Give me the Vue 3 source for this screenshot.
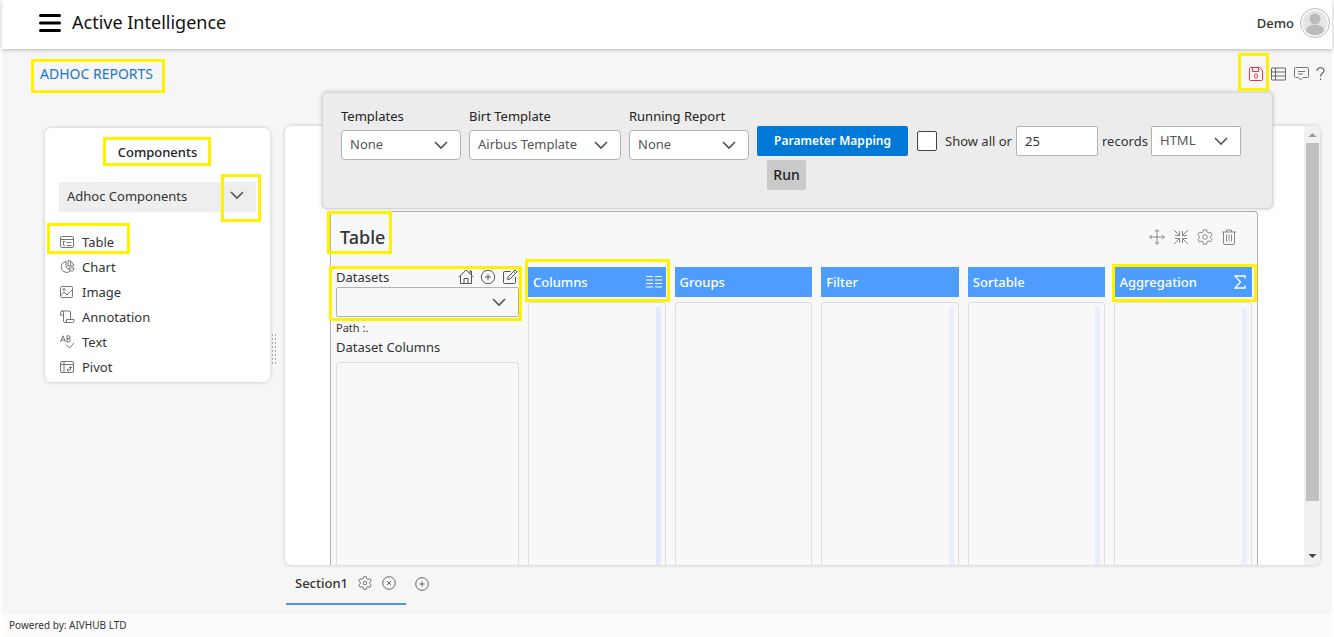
<script setup>
import { ref } from 'vue'

const components = [
  { name: 'Table', icon: 'table' },
  { name: 'Chart', icon: 'chart' },
  { name: 'Image', icon: 'image' },
  { name: 'Annotation', icon: 'annotation' },
  { name: 'Text', icon: 'text' },
  { name: 'Pivot', icon: 'pivot' },
]

const pickers = [
  { id: 'templates', label: 'Templates', value: 'None' },
  { id: 'birt', label: 'Birt Template', value: 'Airbus Template', wide: true },
  { id: 'running', label: 'Running Report', value: 'None' },
]

const columns = [
  { name: 'Columns', icon: 'list', mark: true, track: 'strong' },
  { name: 'Groups' },
  { name: 'Filter', track: 'soft' },
  { name: 'Sortable', track: 'soft' },
  { name: 'Aggregation', icon: 'sigma', mark: true, track: 'soft' },
]

const records = ref('25')
const showAll = ref(false)
</script>

<template>
  <div class="app">
    <header class="topbar">
      <button class="icon-btn menu" aria-label="Menu">
        <svg width="22" height="20" viewBox="0 0 22 20"><path d="M1.5 2.5h19M1.5 10h19M1.5 17.5h19" stroke="#000" stroke-width="3" stroke-linecap="round" /></svg>
      </button>
      <h1>Active Intelligence</h1>
      <span class="user">Demo</span>
      <svg class="avatar" width="30" height="30" viewBox="0 0 30 30">
        <circle cx="15" cy="15" r="14.5" fill="#fff" stroke="#b9b9b9" />
        <circle cx="15" cy="15" r="12.5" fill="#e4e5e6" />
        <circle cx="15" cy="11" r="5.5" fill="#babbbd" />
        <path d="M6 23.500c0-5 3.500-6.500 9-6.500s9 1.500 9 6.500a12.500 12.500 0 0 1-18 0z" fill="#babbbd" />
      </svg>
    </header>

    <main class="body">
      <div class="subbar">
        <a class="crumb host" href="#">ADHOC REPORTS<span class="mark mark-crumb"></span></a>
        <div class="tools">
          <button class="icon-btn host" aria-label="Save">
            <svg width="14" height="14" viewBox="0 0 14 14" fill="none" stroke="#e8343f"><path d="M1.500.5H10.500L13.500 3.500v9a1 1 0 0 1-1 1h-11a1 1 0 0 1-1-1v-11a1 1 0 0 1 1-1zM3.500.5v4h6v-4" /><rect x="5.500" y="7" width="3" height="4" rx="1.300" /></svg>
            <span class="mark mark-save"></span>
          </button>
          <button class="icon-btn" aria-label="Grid">
            <svg width="15" height="14" viewBox="0 0 15 14" fill="none" stroke="#666"><rect x=".5" y="1" width="14" height="12" rx="1" /><path d="M.5 5h14M.5 9h14M4.500 1v12" /></svg>
          </button>
          <button class="icon-btn" aria-label="Comments">
            <svg width="15" height="14" viewBox="0 0 15 14" fill="none" stroke="#777"><path d="M1.500.5h12a1 1 0 0 1 1 1v8a1 1 0 0 1-1 1H9L6.500 13 4.500 10.500h-3a1 1 0 0 1-1-1v-8a1 1 0 0 1 1-1zM4 4.500h7M4 7h5" /></svg>
          </button>
          <button class="icon-btn" aria-label="Help">
            <svg class="help" width="7" height="14" viewBox="1 0 7 14" fill="none" stroke="#555"><path d="M1 4C1 1.700 2.500.7 4.500.7S8 1.900 8 3.700C8 6.200 4.500 6.300 4.500 9.500M4.500 11.500v1.500" stroke-width="1.100" /></svg>
          </button>
        </div>
      </div>

      <div class="workspace">
        <aside class="sidebar">
          <h2><span class="host">Components<span class="mark mark-comp"></span></span></h2>
          <button class="accordion">
            <span>Adhoc Components</span>
            <span class="host chev-slot">
              <svg class="chev" width="14" height="9" viewBox="0 0 14 9"><path d="M1 1l6 6 6-6" /></svg>
              <span class="mark mark-chev"></span>
            </span>
          </button>
          <ul>
            <li v-for="c in components" :key="c.name" class="host">
              <svg width="15" height="14" viewBox="0 0 15 14" fill="none" stroke="#666" stroke-width="0.900">
                <template v-if="c.icon === 'table'"><rect x=".5" y="1.500" width="13" height="11" rx="1.500" /><path d="M.5 4.500h13M2.500 6.500h2.500M3.500 6.500v4H5M6.500 7.500h5M6.500 10.500h5" /></template>
                <template v-else-if="c.icon === 'chart'"><path d="M6 1.500A5.500 5.500 0 1 0 10.500 11L6 7zM8 .5V6h5.500A5.500 5.500 0 0 0 8 .5zM8.500 8H14a5 5 0 0 1-2 3.500zM10.500 1.500V6" /></template>
                <template v-else-if="c.icon === 'image'"><rect x=".5" y="1.500" width="12" height="11" rx="1" /><path d="M.5 11l3.500-4 3 3 5.500-5.500" /><circle cx="4" cy="4.500" r="1" /></template>
                <template v-else-if="c.icon === 'annotation'"><path d="M.5 5V2.500a1.500 1.500 0 0 1 3 0V5h-3M2 1h7.500a1 1 0 0 1 1 1v7.500M3.500 5v6a1.500 1.500 0 0 0 1.500 1.500h7.500A1.500 1.500 0 0 0 14 11V9.500H6.500V11A1.500 1.500 0 0 1 5 12.500" /></template>
                <template v-else-if="c.icon === 'text'"><path d="M.5 7L3 .8 5.500 7M1.300 5h3.400M7 .8V7h2a1.700 1.700 0 0 0 0-3.300H7h1.800a1.400 1.400 0 0 0 0-2.900zM6 9.500l3.500 3.500L14 8" /></template>
                <template v-else><rect x=".5" y="1.500" width="13" height="11" rx="1.500" /><path d="M.5 4.500h13M4 1.500v11M7.500 10h3V7M9 8l1.500-1.500L12 8M8.500 8.500L7 10l1.500 1.500" /></template>
              </svg>
              <span>{{ c.name }}</span>
              <span v-if="c.icon === 'table'" class="mark mark-item"></span>
            </li>
          </ul>
        </aside>

        <div class="splitter"></div>

        <div class="stage">
          <section class="canvas">
            <div class="viewport">
              <article class="panel">
                <div class="panel-head">
                  <h2>Table</h2>
                  <span class="mark mark-title"></span>
                  <div class="panel-tools">
                    <button class="icon-btn" aria-label="Move"><svg width="16" height="16" viewBox="0 0 16 16"><path d="M8 .7v14.600M.7 8h14.600M5.800 2.800L8 .7l2.200 2.100M5.800 13.200L8 15.300l2.200-2.100M2.800 5.800L.7 8l2.100 2.200M13.200 5.800L15.300 8l-2.100 2.200" /></svg></button>
                    <button class="icon-btn" aria-label="Shrink"><svg width="16" height="16" viewBox="0 0 16 16"><path d="M1 1l5.500 5.500M2 6.500h4.500V2M15 1L9.500 6.500M14 6.500H9.500V2M1 15l5.500-5.500M2 9.500h4.500V14M15 15L9.500 9.500M14 9.500H9.500V14" /></svg></button>
                    <button class="icon-btn" aria-label="Settings"><svg width="16" height="16" viewBox="0 0 16 16"><path d="M6.500.8h3l.5 2.300 1.300.8 2.300-.8 1.500 2.600-1.700 1.600v1.400l1.700 1.600-1.500 2.600-2.300-.8-1.300.8-.5 2.300h-3L6 12.900l-1.300-.8-2.300.8-1.500-2.600 1.700-1.600V7.300L.9 5.700l1.500-2.600 2.300.8L6 3.100z" /><circle cx="8" cy="8" r="2.300" /></svg></button>
                    <button class="icon-btn" aria-label="Delete"><svg width="16" height="16" viewBox="0 0 16 16"><path d="M1 3h14M5.500 3V1h5v2M2.500 3v11a1.500 1.500 0 0 0 1.500 1.500h8a1.500 1.500 0 0 0 1.500-1.500V3M5.500 5.500v7M8 5.500v7M10.500 5.500v7" /></svg></button>
                  </div>
                </div>

                <div class="grid">
                  <div class="datasets host">
                    <div class="ds-label">
                      <label for="dataset">Datasets</label>
                      <button class="icon-btn" aria-label="Home"><svg width="16" height="16" viewBox="0 0 16 16"><path d="M.7 8L8 1l7.300 7M2.500 6.500v8h11v-8M6 14.500v-5h4v5M12 4.500V2h1.500v4" /></svg></button>
                      <button class="icon-btn" aria-label="Add dataset"><svg width="16" height="16" viewBox="0 0 16 16"><circle cx="8" cy="8" r="6.700" /><path d="M8 5v6M5 8h6" /></svg></button>
                      <button class="icon-btn" aria-label="Edit dataset"><svg width="16" height="16" viewBox="0 0 16 16"><path d="M8.500 2.500h-6a1 1 0 0 0-1 1v10a1 1 0 0 0 1 1h10a1 1 0 0 0 1-1V8M5.500 10.500l.6-2.600L13 1l2 2-6.900 6.900zM11.500 2.500l2 2" /></svg></button>
                    </div>
                    <div class="select ds-select">
                      <select id="dataset"><option></option></select>
                      <svg class="chev" width="14" height="9" viewBox="0 0 14 9"><path d="M1 1l6 6 6-6" /></svg>
                    </div>
                    <p class="path">Path :.</p>
                    <p class="ds-cols">Dataset Columns</p>
                    <div class="drop"></div>
                    <span class="mark mark-ds"></span>
                  </div>

                  <div v-for="c in columns" :key="c.name" class="column">
                    <div class="col-head host">
                      <span>{{ c.name }}</span>
                      <svg v-if="c.icon === 'list'" width="16" height="14" viewBox="0 0 16 14"><path d="M0 1.500h7M9 1.500h7M0 5h7M9 5h7M0 8.500h7M9 8.500h7M0 12h7M9 12h7" stroke="#fff" /></svg>
                      <svg v-if="c.icon === 'sigma'" width="14" height="14" viewBox="0 0 14 14" fill="none"><path d="M11 3.500V1H1l5.500 6L1 13h10v-2.500" stroke="#fff" stroke-width="1.300" /></svg>
                      <span v-if="c.mark" class="mark" :class="c.icon === 'list' ? 'mark-cols' : 'mark-agg'"></span>
                    </div>
                    <div class="drop"><i v-if="c.track" :class="c.track"></i></div>
                  </div>
                </div>
              </article>
              <div class="scrollbar">
                <svg width="15" height="17" viewBox="0 0 15 17"><path d="M3.500 11h8l-4-4z" fill="#9a9a9a" /></svg>
                <div class="thumb"></div>
                <div class="rest"></div>
                <svg width="15" height="17" viewBox="0 0 15 17"><path d="M3.500 6h8l-4 4z" fill="#444" /></svg>
              </div>
            </div>

            <form class="toolbar" @submit.prevent>
              <div v-for="p in pickers" :key="p.id" class="picker" :class="{ wide: p.wide }">
                <label :for="p.id">{{ p.label }}</label>
                <div class="select">
                  <select :id="p.id"><option>{{ p.value }}</option></select>
                  <svg class="chev" width="14" height="9" viewBox="0 0 14 9"><path d="M1 1l6 6 6-6" /></svg>
                </div>
              </div>
              <div class="actions">
                <div class="row">
                  <button class="primary">Parameter Mapping</button>
                  <input id="all" v-model="showAll" type="checkbox" />
                  <label for="all" class="all">Show all or</label>
                  <input id="records" v-model="records" type="text" />
                  <label for="records" class="rec">records</label>
                  <div class="select format">
                    <select aria-label="Format"><option>HTML</option></select>
                    <svg class="chev" width="14" height="9" viewBox="0 0 14 9"><path d="M1 1l6 6 6-6" /></svg>
                  </div>
                </div>
                <button class="run">Run</button>
              </div>
            </form>
          </section>

          <nav class="tabs">
            <div class="tab">
              <a href="#">Section1</a>
              <button class="icon-btn" aria-label="Section settings"><svg width="14" height="14" viewBox="0 0 16 16"><path d="M6.500.8h3l.5 2.300 1.300.8 2.300-.8 1.500 2.600-1.700 1.600v1.400l1.700 1.600-1.500 2.600-2.300-.8-1.300.8-.5 2.300h-3L6 12.900l-1.300-.8-2.300.8-1.500-2.600 1.700-1.600V7.300L.9 5.700l1.500-2.600 2.300.8L6 3.100z" /><circle cx="8" cy="8" r="2" /></svg></button>
              <button class="icon-btn" aria-label="Close section"><svg width="14" height="14" viewBox="0 0 14 14"><circle cx="7" cy="7" r="6.300" /><path d="M5 5l4 4M9 5l-4 4" /></svg></button>
            </div>
            <button class="icon-btn add" aria-label="Add section"><svg width="14" height="14" viewBox="0 0 14 14"><circle cx="7" cy="7" r="6.300" /><path d="M7 4.500v5M4.500 7h5" /></svg></button>
          </nav>
        </div>
      </div>
    </main>

    <footer>Powered by: AIVHUB LTD</footer>
  </div>
</template>

<style>
body { margin: 0; background: #fff; }
</style>

<style scoped>
* { box-sizing: border-box; }
.app {
  min-height: 100vh;
  display: flex;
  flex-direction: column;
  padding: 0 2px;
  font: 13px/20px "Noto Sans", sans-serif;
  color: #333;
}
h1, h2, p, ul { margin: 0; padding: 0; font-weight: 400; }
button, input, select { font: inherit; color: inherit; margin: 0; }
svg { display: block; flex: none; }
.icon-btn { display: block; padding: 0; border: 0; background: none; }
.host { position: relative; }
.mark { position: absolute; border: 3px solid #fff200; pointer-events: none; z-index: 5; }

.topbar {
  display: flex;
  align-items: center;
  height: 49px;
  padding: 0 2px 4px 37px;
  background: #fff;
  box-shadow: 0 1px 4px #0004;
  z-index: 1;
}
.topbar h1 { margin-left: 11px; padding-bottom: 2px; font: 18px/24px "Noto Sans", sans-serif; color: #111; }
.user { margin-left: auto; margin-right: 6px; font-weight: 500; }

.body { flex: 1; display: flex; flex-direction: column; background: #f6f6f6; }
.subbar { display: flex; justify-content: space-between; align-items: center; height: 50px; padding: 0 8px 0 38px; }
.crumb { color: #1c74cc; text-decoration: none; font-size: 14px; line-height: 22px; }
.tools { display: flex; gap: 8px; }
.help { overflow: visible; }
.mark-crumb { inset: -4px -12px -8px -9px; }
.mark-save { inset: -14px -6px -10px -11px; }

.workspace { flex: 1; display: flex; align-items: stretch; padding: 27px 12px 0 43px; }
.sidebar {
  align-self: flex-start;
  width: 225px;
  margin-top: 2px;
  padding: 14px 14px 2px;
  background: #fff;
  border-radius: 6px;
  box-shadow: 0 0 4px #0003;
}
.sidebar h2 { font: 500 13px/20px "Noto Sans", sans-serif; color: #222; text-align: center; }
.mark-comp { inset: -6px -14px -5px -15px; }
.accordion {
  display: flex;
  justify-content: space-between;
  align-items: center;
  width: 100%;
  height: 30px;
  margin-top: 20px;
  padding: 0 12px 3px 8px;
  border: 0;
  background: #eee;
}
.mark-chev { inset: -17px -17px -22px -9px; }
.chev { fill: none; stroke: #555; stroke-width: 1.6; }
.sidebar ul { list-style: none; margin-top: 18px; }
.sidebar li { display: flex; align-items: center; gap: 7px; height: 25px; padding: 0 0 2px 1px; }
.mark-item { inset: -7px 126px 1px -12px; }

.splitter {
  align-self: flex-start;
  width: 6px;
  height: 31px;
  margin: 207px 8px 0 1px;
  background-image: linear-gradient(#bbb 2px, transparent 2px), linear-gradient(90deg, transparent 2px, #f6f6f6 2px);
  background-size: 3px 4px;
  background-image: radial-gradient(circle, #aaa 1px, transparent 1px);
}

.stage { flex: 1; min-width: 0; display: flex; flex-direction: column; }
.canvas { position: relative; flex: 1; display: flex; border-radius: 6px; box-shadow: 0 0 4px #0003; background: #fff; }
.viewport { flex: 1; display: flex; overflow: hidden; border-radius: 6px; padding-left: 45px; }
.panel {
  position: relative;
  flex: 1;
  display: flex;
  flex-direction: column;
  margin: 85px 46px 0 0;
  border: 1px solid #b3b3b3;
  border-bottom: 0;
  border-radius: 4px 4px 0 0;
  background: #f8f8f8;
}
.panel-head { display: flex; justify-content: space-between; align-items: center; height: 55px; padding: 0 20px 6px 9px; }
.panel-head h2 { font: 500 18px/24px "Noto Sans", sans-serif; }
.mark-title { left: -4px; top: -1px; width: 65px; height: 43px; }
.panel-tools { display: flex; gap: 8px; }
.panel-tools svg { fill: none; stroke: #888; }

.grid { flex: 1; display: grid; grid-template-columns: 183px repeat(5, 1fr); gap: 9px; padding: 0 5px; }
.datasets, .column { display: flex; flex-direction: column; min-width: 0; }
.ds-label { display: flex; align-items: center; gap: 6px; height: 20px; padding-right: 1px; }
.ds-label label { margin-right: auto; }
.ds-label svg { fill: none; stroke: #555; }
.mark-ds { inset: -1px -3px auto -7px; height: 55px; }
.path { font-size: 11px; margin-top: 1px; line-height: 19px; }
.ds-cols { margin-bottom: 5px; }
.drop { flex: 1; display: flex; justify-content: flex-end; padding: 4px 4px 0; border: 1px solid #ddd; border-bottom: 0; border-radius: 4px 4px 0 0; }
.drop i { width: 5px; background: #eceffb; }
.drop i.strong { background: #e2ebfb; }
.col-head {
  display: flex;
  justify-content: space-between;
  align-items: center;
  height: 30px;
  margin-bottom: 5px;
  padding: 0 4px 0 5px;
  background: #4f9cff;
  color: #fff;
  font-weight: 500;
}
.mark-cols { inset: -8px -4px -5px -3px; }
.mark-agg { inset: -3px -5px -5px -2px; }

.scrollbar { width: 16px; display: flex; flex-direction: column; background: #f1f1f1; padding: 0 1px; align-items: center; }
.thumb { flex: 359; width: 13px; background: #c1c1c1; }
.rest { flex: 47; }

.select { display: grid; align-items: center; justify-items: end; }
.select select {
  grid-area: 1 / 1;
  width: 100%;
  height: 30px;
  padding: 0 8px 2px;
  appearance: none;
  border: 1px solid #b3b3b3;
  border-radius: 4px;
  background: #fff;
  color: #555;
}
.select .chev { grid-area: 1 / 1; margin-right: 13px; pointer-events: none; }
.ds-select select { background: #f8f8f8; border-radius: 2px; }

.toolbar {
  position: absolute;
  left: 37px;
  right: 47px;
  top: -34px;
  height: 117px;
  display: flex;
  gap: 8px;
  padding: 13px 18px;
  background: #ececec;
  border: 1px solid #d6d6d6;
  border-radius: 5px;
  box-shadow: 0 0 4px #0003;
}
.picker { width: 120px; }
.picker.wide { width: 152px; }
.picker label { display: block; margin-bottom: 4px; line-height: 20px; color: #222; }
.actions { margin-top: 20px; }
.row { display: flex; align-items: center; }
.primary { width: 151px; height: 30px; padding: 0; border: 0; border-radius: 2px; background: #0078d7; color: #fff; font-size: 12px; font-weight: 600; }
input[type="checkbox"] { appearance: none; width: 20px; height: 20px; margin-left: 9px; border: 1px solid #444; border-radius: 2px; background: #fff; }
input[type="text"] { width: 82px; height: 30px; padding: 0 8px; border: 1px solid #b3b3b3; border-radius: 2px; background: #fff; }
.all { width: 79px; padding-left: 8px; white-space: nowrap; }
.rec { width: 53px; padding-left: 4px; }
.format { width: 90px; }
.format select { border-radius: 2px; }
.run { display: block; width: 39px; height: 30px; margin: 4px 0 0 10px; padding: 0; border: 0; border-radius: 2px; background: #cacaca; color: #222; font-size: 14px; font-weight: 500; }

.tabs { display: flex; height: 49px; padding: 0 0 9px 1px; }
.tab { display: flex; align-items: center; gap: 10px; width: 120px; padding: 0 9px 3px; border-bottom: 2px solid #4b96dc; }
.tab a { color: #333; font-weight: 500; text-decoration: none; }
.tabs svg { fill: none; stroke: #555; stroke-width: 0.900; }
.add { margin: 0 0 3px 9px; }

footer { height: 23px; padding-left: 7px; background: #fcfcfc; font-size: 10px; line-height: 23px; }
</style>
